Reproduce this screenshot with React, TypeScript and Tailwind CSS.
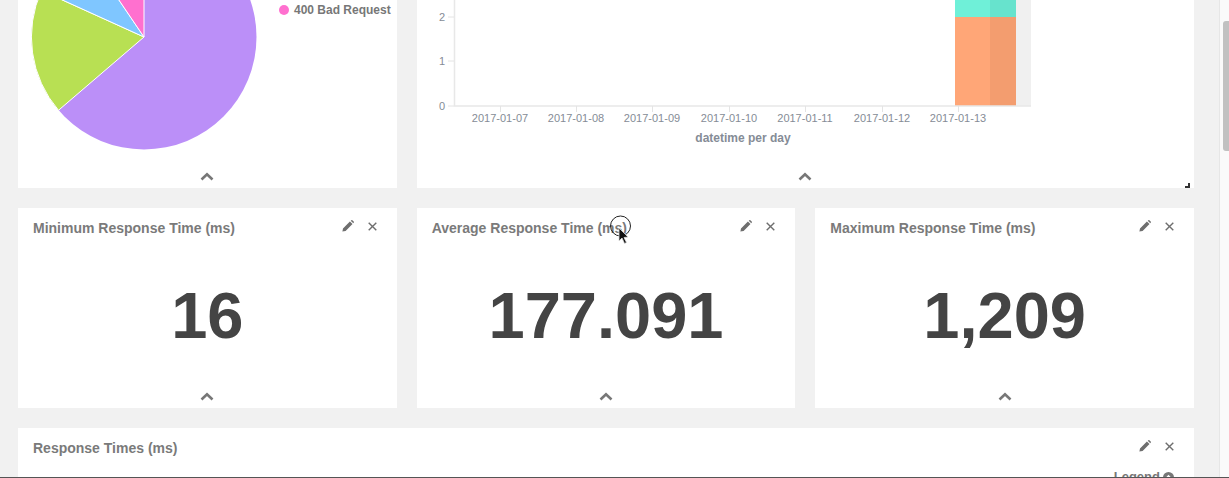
const FONT = "font-['Liberation_Sans',Arial,sans-serif]"

const STATS = [
  { title: "Minimum Response Time (ms)", value: "16" },
  { title: "Average Response Time (ms)", value: "177.091" },
  { title: "Maximum Response Time (ms)", value: "1,209" },
]

const DATES = ["2017-01-07", "2017-01-08", "2017-01-09", "2017-01-10", "2017-01-11", "2017-01-12", "2017-01-13"]
const TICK_X = [83, 159, 235, 312, 388, 465, 541]

function PanelHeader({ title }: { title: string }) {
  return (
    <div className="flex items-start justify-between pl-[15px] pr-[20px] pt-[12px]">
      <h3 className="text-[14px] leading-[16px] font-bold text-[#7a7a7a]">{title}</h3>
      <div className="flex items-center gap-[14px]">
        <svg width="12" height="12" viewBox="0 0 12 12" className="text-[#6e6e6e]">
          <path d="M0.4 11.6 L1 8.4 L7.9 1.5 L10.5 4.1 L3.6 11 Z M8.7 0.7 L9.4 0.2 Q9.9 -0.1 10.4 0.3 L11.7 1.6 Q12.1 2.1 11.8 2.6 L11.3 3.3 Z" fill="currentColor" />
        </svg>
        <svg width="9" height="9" viewBox="0 0 9 9" className="text-[#6e6e6e]">
          <path d="M0.7 0.7 L8.3 8.3 M8.3 0.7 L0.7 8.3" stroke="currentColor" strokeWidth="1.4" fill="none" />
        </svg>
      </div>
    </div>
  )
}

function Chevron() {
  return (
    <div className="flex justify-center pb-[7px]">
      <svg width="14" height="9" viewBox="0 0 14 9">
        <path d="M1.5 7.5 L7 2.2 L12.5 7.5" stroke="#777" strokeWidth="2.6" fill="none" />
      </svg>
    </div>
  )
}

function Pie() {
  // center 113,37 radius 112.5, clipped by the top of the page
  return (
    <svg width="226" height="151" viewBox="0 0 226 151" className="shrink-0">
      <circle cx="113" cy="37" r="112.5" fill="#bb8ff8" />
      <path d="M113 37 L27.5 110.3 A112.5 112.5 0 0 1 10.5 -9.5 Z" fill="#b8e053" stroke="#fff" strokeWidth="1" />
      <path d="M113 37 L10.5 -9.5 A112.5 112.5 0 0 1 50 -56 Z" fill="#7fc6ff" stroke="#fff" strokeWidth="1" />
      <path d="M113 37 L50 -56 A112.5 112.5 0 0 1 113 -75.5 Z" fill="#ff70cf" stroke="#fff" strokeWidth="1" />
    </svg>
  )
}

function BarChart() {
  return (
    <svg width="777" height="150" viewBox="0 0 777 150" className={`block ${FONT}`}>
      <rect x="37" y="0" width="577" height="106" fill="#fff" />
      <rect x="599" y="0" width="15" height="106" fill="#f0f0f0" />
      <rect x="538" y="17" width="61" height="89" fill="#ffa677" />
      <rect x="538" y="0" width="61" height="17" fill="#6ff0d8" />
      <rect x="573" y="17" width="26" height="89" fill="#f39d6f" />
      <rect x="573" y="0" width="26" height="17" fill="#67e3cd" />
      <path d="M37.5 0 V106 H614" stroke="#e8e8e8" strokeWidth="1.5" fill="none" />
      {[17, 61, 106].map((y) => (
        <path key={y} d={`M31 ${y} H37`} stroke="#e4e4e4" strokeWidth="1" />
      ))}
      {["2", "1", "0"].map((label, i) => (
        <text key={label} x="28" y={[21, 65, 110][i]} textAnchor="end" fontSize="11" fill="#858c96">
          {label}
        </text>
      ))}
      {DATES.map((date, i) => (
        <g key={date}>
          <path d={`M${TICK_X[i]}.5 106 V112`} stroke="#e4e4e4" strokeWidth="1" />
          <text x={TICK_X[i]} y="122" textAnchor="middle" fontSize="11" fill="#858c96">
            {date}
          </text>
        </g>
      ))}
      <text x="326" y="142" textAnchor="middle" fontSize="12" fontWeight="700" fill="#858c96">
        datetime per day
      </text>
    </svg>
  )
}

export default function App() {
  return (
    <div className={`relative flex h-[478px] w-[1229px] overflow-hidden border-b border-[#555] bg-[#f1f1f1] ${FONT}`}>
      <main className="grid h-full w-[1219px] shrink-0 grid-cols-3 grid-rows-[188px_200px_1fr] gap-5 pl-[18px] pr-[25px]">
        <section className="flex flex-col justify-between overflow-hidden bg-white">
          <div className="flex pl-[13px]">
            <Pie />
            <div className="ml-[22px] mt-[3px] flex items-center gap-[5px] self-start">
              <span className="size-[10px] rounded-full bg-[#ff70cf]" />
              <span className="text-[12px] leading-[14px] font-bold whitespace-nowrap text-[#777]">400 Bad Request</span>
            </div>
          </div>
          <Chevron />
        </section>

        <section className="relative col-span-2 flex flex-col justify-between overflow-hidden bg-white">
          <BarChart />
          <Chevron />
          <span className="absolute right-[4px] bottom-0 h-[5px] w-[5px] border-r-2 border-b-2 border-[#333]" />
        </section>

        {STATS.map((stat) => (
          <section key={stat.title} className="flex flex-col bg-white">
            <PanelHeader title={stat.title} />
            <div className="flex flex-1 items-center justify-center pt-[2px] text-[65px] leading-none font-bold text-[#444]">
              {stat.value}
            </div>
            <Chevron />
          </section>
        ))}

        <section className="col-span-3 flex flex-col bg-white">
          <PanelHeader title="Response Times (ms)" />
          <div className="flex items-center justify-end gap-[3px] pr-[20px] pt-[14px]">
            <span className="text-[13px] leading-[14px] font-bold text-[#777]">Legend</span>
            <svg width="11" height="11" viewBox="0 0 11 11">
              <circle cx="5.5" cy="5.5" r="5.5" fill="#777" />
              <path d="M3 6.5 L5.5 4 L8 6.5" stroke="#fff" strokeWidth="1.6" fill="none" />
            </svg>
          </div>
        </section>
      </main>

      <aside className="relative h-full w-[10px] border-l border-[#e6e6e6] bg-[#fafafa]">
        <div className="mt-[21px] ml-[3px] h-[130px] w-[7px] rounded-l-[3px] bg-[#c1c1c1]" />
      </aside>

      {/* recorded mouse pointer */}
      <svg width="24" height="36" viewBox="0 0 24 36" className="absolute top-[215px] left-[609px]">
        <circle cx="11.5" cy="11" r="10" fill="none" stroke="#222" strokeWidth="1" />
        <path d="M10 13 V26 L13 23 L15.5 28.5 L17.5 27.5 L15 22.5 L19 22 Z" fill="#111" stroke="#ddd" strokeWidth="0.8" />
      </svg>
    </div>
  )
}
